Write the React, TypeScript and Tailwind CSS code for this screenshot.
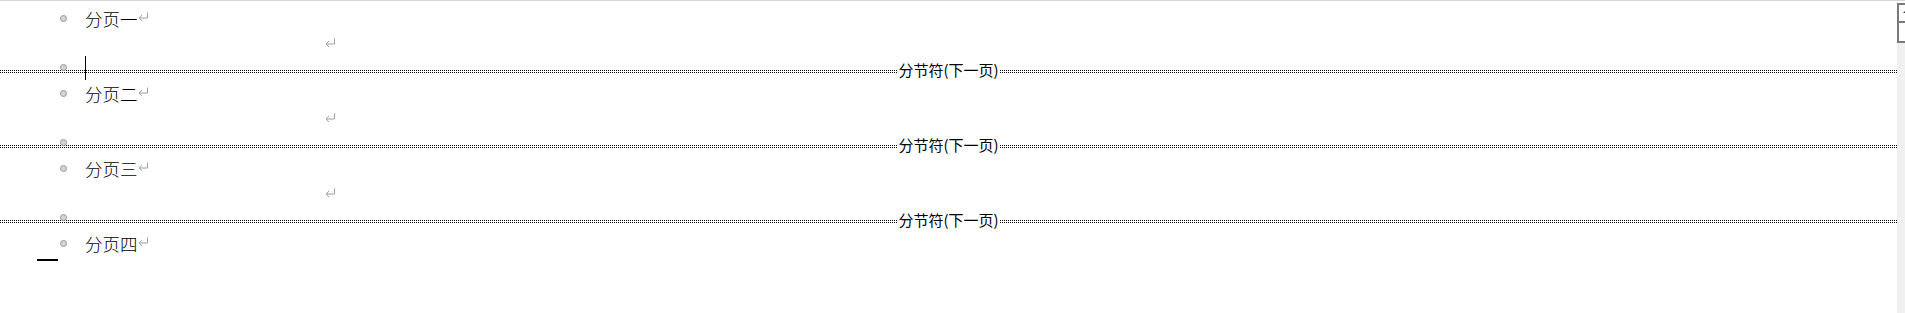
const sections = ["分页一", "分页二", "分页三", "分页四"]

const ReturnMark = ({ className = "" }: { className?: string }) => (
  <svg width="11" height="10" viewBox="0 0 11 10" className={className}>
    <path d="M9.5 0.5 V6 H1.5" fill="none" stroke="#a0a0a0" strokeWidth="1" />
    <path d="M4 3 L1.2 6 L4 9" fill="none" stroke="#a0a0a0" strokeWidth="1" />
  </svg>
)

const Bullet = () => (
  <span className="block w-[7px] h-[7px] rounded-full bg-[#d4d4d4] border border-[#999999]" />
)

const SectionBreak = ({ cursor }: { cursor?: boolean }) => (
  <div className="relative h-[25px] pt-[5px] flex items-center">
    <div className="flex-1 h-[3px] border-y border-dotted border-black" />
    <span className="px-[1px] -mt-[4px] text-[15px] leading-none text-black">分节符(下一页)</span>
    <div className="flex-1 h-[3px] border-y border-dotted border-black" />
    <div className="absolute left-[60px] top-[8px]">
      <Bullet />
    </div>
    {cursor && <div className="absolute left-[85px] top-0 w-[1px] h-[24px] bg-black" />}
  </div>
)

export default function App() {
  return (
    <div
      className="flex w-full h-[313px] bg-white border-t border-[#d6d6d6] overflow-hidden"
      style={{ fontFamily: '"Noto Sans CJK SC", "Noto Sans", sans-serif' }}
    >
      <div className="flex-1 pt-[5px]">
        {sections.map((title, i) => (
          <div key={title}>
            <div className="h-[25px] flex items-center">
              <div className="pl-[60px] w-[85px]">
                <Bullet />
              </div>
              <span className="text-[17.5px] leading-none font-light text-black">{title}</span>
              <ReturnMark className="-mt-[3px]" />
            </div>
            {i < sections.length - 1 && (
              <>
                <div className="h-[25px] flex items-center pl-[325px]">
                  <ReturnMark className="-mt-[1px]" />
                </div>
                <SectionBreak cursor={i === 0} />
              </>
            )}
          </div>
        ))}
        <div className="pl-[37px] pt-[3px]">
          <div className="w-[21px] h-[2px] bg-black" />
        </div>
      </div>
      <div className="w-[8px] shrink-0 overflow-hidden bg-[#f0f0f0] flex flex-col">
        <div className="h-[2px] bg-white" />
        <div className="w-[17px] h-[20px] border-2 border-[#7a7a7a] bg-white flex items-start pl-[4px] pt-[5px]">
          <span className="block w-0 h-0 border-l-[3px] border-r-[3px] border-b-[3px] border-l-transparent border-r-transparent border-b-[#444]" />
        </div>
        <div className="w-[17px] h-[20px] border-2 border-t-0 border-[#7a7a7a] bg-white" />
      </div>
    </div>
  )
}
